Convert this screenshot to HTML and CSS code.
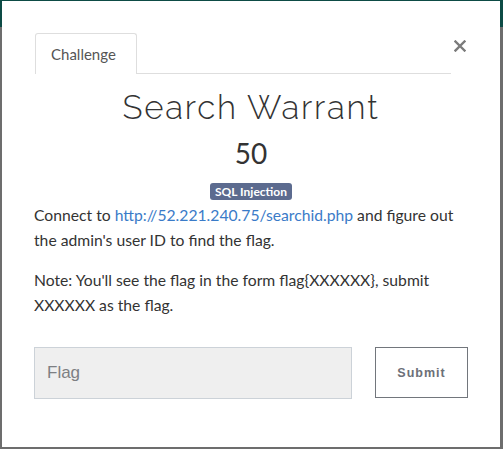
FILE: index.html
```html
<!DOCTYPE html>
<html>
<head>
<meta charset="utf-8">
<link rel="stylesheet" href="styles.css">
</head>
<body>
<div class="modal">
  <div class="modal-header">
    <ul class="tabs">
      <li class="tab active">Challenge</li>
    </ul>
    <button class="close" aria-label="Close">
      <svg width="12" height="12" viewBox="0 0 12 12"><path d="M1.5 1.5 L10.5 10.5 M10.5 1.5 L1.5 10.5" stroke="#7b7b7b" stroke-width="2.4" stroke-linecap="square"/></svg>
    </button>
  </div>
  <div class="modal-body">
    <h2 class="title">Search Warrant</h2>
    <h3 class="points">50</h3>
    <div class="tags"><span class="badge">SQL Injection</span></div>
    <p class="desc">Connect to <a href="#">http://52.221.240.75/searchid.php</a> and figure out the admin's user ID to find the flag.</p>
    <p class="desc">Note: You'll see the flag in the form flag{XXXXXX}, submit XXXXXX as the flag.</p>
    <form class="flag-form">
      <input class="flag-input" type="text" placeholder="Flag">
      <button class="submit" type="button">Submit</button>
    </form>
  </div>
</div>
</body>
</html>
```

FILE: styles.css
```css
html, body {
  margin: 0;
  padding: 0;
  height: 449px;
  overflow: hidden;
}
body {
  background: linear-gradient(to bottom, #0d4b45 0, #0d4b45 27px, #6d6d6d 27px, #6d6d6d 100%);
  font-family: "Lato", "Liberation Sans", sans-serif;
  padding: 1px 3px 2px 2px;
  box-sizing: border-box;
}
.modal {
  background: #fff;
  height: 446px;
  box-sizing: border-box;
  padding: 32px 32px 0 33px;
}
.modal-header {
  display: flex;
  align-items: flex-start;
}
.tabs {
  list-style: none;
  margin: 0;
  padding: 0;
  width: 420px;
  display: flex;
  border-bottom: 1px solid #dedede;
}
.tab {
  font-size: 15px;
  color: #555;
  padding: 11px 15px 11px 15px;
  line-height: 18px;
  border: 1px solid #dedede;
  border-bottom: none;
  border-radius: 3px 3px 0 0;
  margin-bottom: -1px;
  background: #fff;
  width: 70px;
  text-align: left;
}
.close {
  margin-left: 1px;
  margin-top: 6px;
  background: none;
  border: none;
  padding: 0;
  width: 16px;
  height: 14px;
  display: flex;
  align-items: center;
  justify-content: center;
}
.modal-body {
  width: 434px;
  margin-left: -1px;
}
.title {
  margin: 14px 0 0;
  font-family: "Raleway", "Lato", sans-serif;
  font-weight: 300;
  font-size: 33px;
  line-height: 40px;
  letter-spacing: 1.8px;
  text-align: center;
  color: #333;
}
.points {
  margin: 8px 0 0;
  font-weight: 400;
  font-size: 28px;
  line-height: 34px;
  text-align: center;
  color: #333;
}
.tags {
  text-align: center;
  margin-top: 13px;
  line-height: 17px;
  height: 17px;
}
.badge {
  display: inline-block;
  vertical-align: top;
  background: #5c6b8f;
  color: #fff;
  font-weight: 700;
  font-size: 12px;
  line-height: 17px;
  padding: 0 5px;
  border-radius: 3px;
}
.desc {
  margin: 3px 0 15px;
  font-size: 15.7px;
  line-height: 25px;
  color: #333;
}
.desc a {
  color: #3a7bc8;
  text-decoration: none;
}
.flag-form {
  display: flex;
  gap: 23px;
  margin-top: 29px;
}
.flag-input {
  flex: 1;
  height: 52px;
  box-sizing: border-box;
  background: #efefef;
  border: 1px solid #ccd2d8;
  padding: 0 12px;
  font-family: "Liberation Sans", Arial, sans-serif;
  font-size: 17px;
  color: #555;
  outline: none;
}
.flag-input::placeholder {
  color: #7d7f83;
}
.submit {
  width: 93px;
  height: 51px;
  box-sizing: border-box;
  background: #fff;
  border: 1px solid #72767c;
  font-family: "Liberation Sans", Arial, sans-serif;
  font-weight: 700;
  font-size: 12.5px;
  letter-spacing: 1px;
  color: #6c7078;
  padding: 0;
}
```
